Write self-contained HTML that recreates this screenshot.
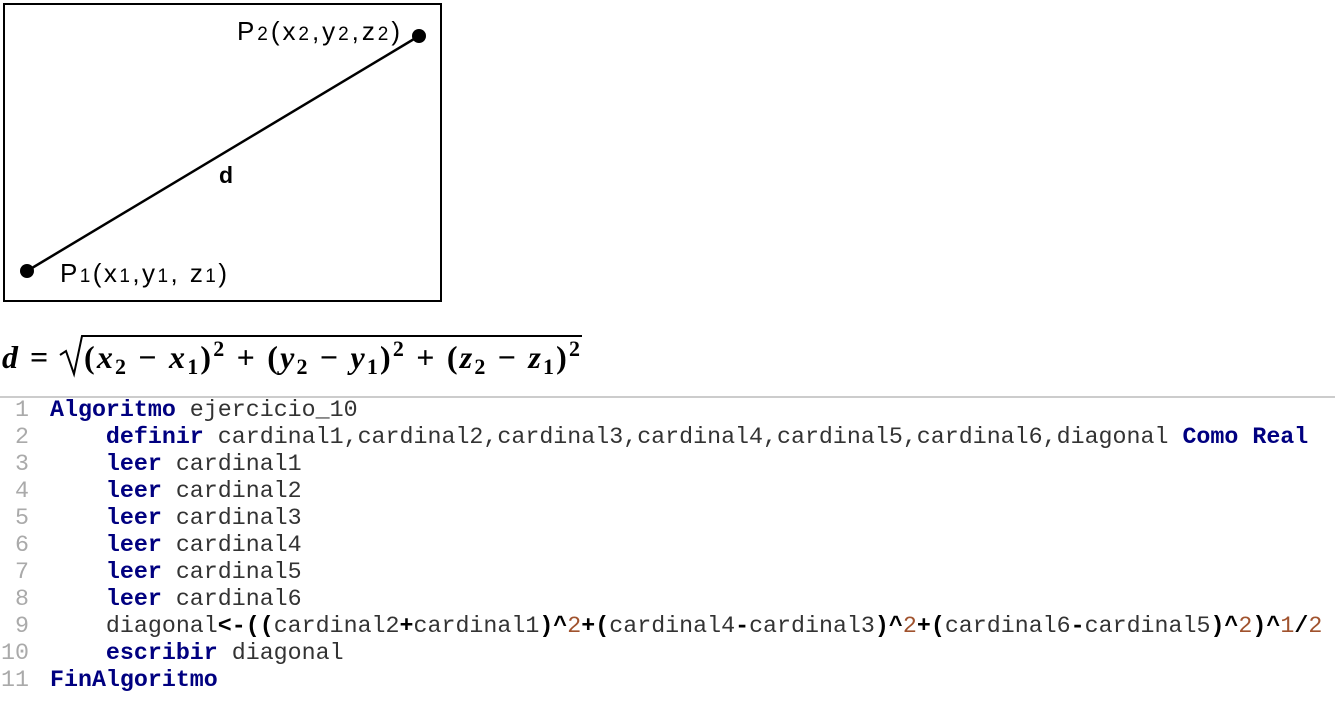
<!DOCTYPE html>
<html><head><meta charset="utf-8"><style>
body{margin:0;width:1335px;height:702px;background:#fff;overflow:hidden;position:relative}
.code{position:absolute;left:0;top:397px;font-family:"Liberation Mono",monospace;font-size:23.3px;line-height:27px;color:#333}
.row{height:27px;white-space:pre}
.ln{display:inline-block;width:29px;text-align:right;color:#aaa;margin-right:21px}
.k{color:#000080;font-weight:bold}
.o{color:#000;font-weight:bold}
.n{color:#a0522d}
</style></head><body>
<svg width="1335" height="400" style="position:absolute;left:0;top:0" font-family="Liberation Sans, sans-serif">
<rect x="4" y="4" width="437" height="297" fill="none" stroke="#000" stroke-width="2"/>
<line x1="27" y1="271" x2="419" y2="36" stroke="#000" stroke-width="2.5"/>
<circle cx="27" cy="271" r="7"/><circle cx="419" cy="36" r="7"/>
<text x="237" y="40" font-size="26" textLength="163" lengthAdjust="spacing">P<tspan font-size="19">2</tspan>(x<tspan font-size="19">2</tspan>,y<tspan font-size="19">2</tspan>,z<tspan font-size="19">2</tspan>)</text>
<text x="60" y="282" font-size="26" textLength="167" lengthAdjust="spacing">P<tspan font-size="19">1</tspan>(x<tspan font-size="19">1</tspan>,y<tspan font-size="19">1</tspan>, z<tspan font-size="19">1</tspan>)</text>
<text x="219" y="183" font-size="23" font-weight="bold">d</text>
<g font-family="Liberation Serif, serif" font-weight="bold" font-style="italic" font-size="32">
<text x="2" y="368">d</text>
<text x="30" y="368" font-style="normal">=</text>
<path d="M60 355 L66 351 L74 374 L82 336 L582 336" fill="none" stroke="#000" stroke-width="2"/>
<text x="84" y="368" textLength="496" lengthAdjust="spacing"><tspan font-style="normal">(</tspan>x<tspan font-size="22" dy="6" font-style="normal">2</tspan><tspan dy="-6" font-style="normal"> − </tspan>x<tspan font-size="22" dy="6" font-style="normal">1</tspan><tspan dy="-6" font-style="normal">)</tspan><tspan font-size="22" dy="-12" font-style="normal">2</tspan><tspan dy="12" font-style="normal"> + (</tspan>y<tspan font-size="22" dy="6" font-style="normal">2</tspan><tspan dy="-6" font-style="normal"> − </tspan>y<tspan font-size="22" dy="6" font-style="normal">1</tspan><tspan dy="-6" font-style="normal">)</tspan><tspan font-size="22" dy="-12" font-style="normal">2</tspan><tspan dy="12" font-style="normal"> + (</tspan>z<tspan font-size="22" dy="6" font-style="normal">2</tspan><tspan dy="-6" font-style="normal"> − </tspan>z<tspan font-size="22" dy="6" font-style="normal">1</tspan><tspan dy="-6" font-style="normal">)</tspan><tspan font-size="22" dy="-12" font-style="normal">2</tspan></text>
</g>
<line x1="0" y1="397" x2="1335" y2="397" stroke="#999" stroke-width="1"/>
</svg>
<div class="code"><div class="row"><span class="ln">1</span><span class="k">Algoritmo</span> ejercicio_10</div><div class="row"><span class="ln">2</span>    <span class="k">definir</span> cardinal1,cardinal2,cardinal3,cardinal4,cardinal5,cardinal6,diagonal <span class="k">Como</span> <span class="k">Real</span></div><div class="row"><span class="ln">3</span>    <span class="k">leer</span> cardinal1</div><div class="row"><span class="ln">4</span>    <span class="k">leer</span> cardinal2</div><div class="row"><span class="ln">5</span>    <span class="k">leer</span> cardinal3</div><div class="row"><span class="ln">6</span>    <span class="k">leer</span> cardinal4</div><div class="row"><span class="ln">7</span>    <span class="k">leer</span> cardinal5</div><div class="row"><span class="ln">8</span>    <span class="k">leer</span> cardinal6</div><div class="row"><span class="ln">9</span>    diagonal<span class="o">&lt;-((</span>cardinal2<span class="o">+</span>cardinal1<span class="o">)^</span><span class="n">2</span><span class="o">+(</span>cardinal4<span class="o">-</span>cardinal3<span class="o">)^</span><span class="n">2</span><span class="o">+(</span>cardinal6<span class="o">-</span>cardinal5<span class="o">)^</span><span class="n">2</span><span class="o">)^</span><span class="n">1</span><span class="o">/</span><span class="n">2</span></div><div class="row"><span class="ln">10</span>    <span class="k">escribir</span> diagonal</div><div class="row"><span class="ln">11</span><span class="k">FinAlgoritmo</span></div></div>
</body></html>
